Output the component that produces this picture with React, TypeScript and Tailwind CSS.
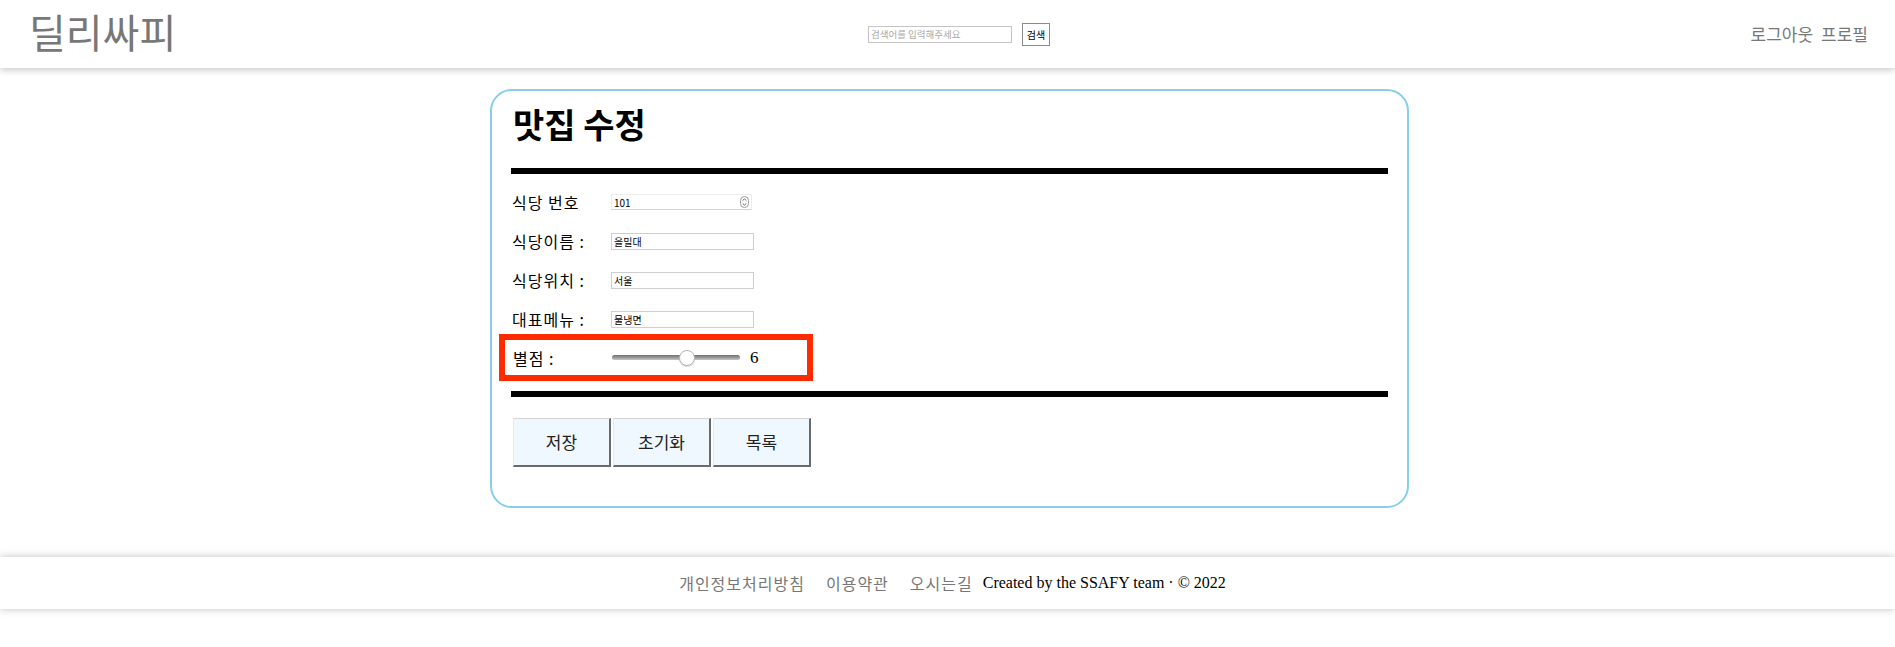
import { useState } from 'react';

const KR = '[font-family:"Noto_Sans_CJK_KR","Noto_Sans",sans-serif]';

const SpinIcon = () => (
    <svg width="9" height="12" viewBox="0 0 9 12" className="absolute right-[3px] top-[2px]">
        <rect x="0.5" y="0.5" width="8" height="11" rx="4" fill="white" stroke="#9a9a9a" />
        <path d="M2.6 4.6 L4.5 2.9 L6.4 4.6" fill="none" stroke="#555" strokeWidth="0.9" />
        <path d="M2.6 7.4 L4.5 9.1 L6.4 7.4" fill="none" stroke="#555" strokeWidth="0.9" />
    </svg>
);

const Slider = ({ value, max }: { value: number, max: number }) => {
    const left = (value / max) * (128 - 16);
    return (
        <div className="relative w-[128px] h-[16px] flex items-center">
            <div className="w-full h-[5px] rounded-full bg-gradient-to-b from-[#6f6f6f] to-[#c4c4c4]" />
            <div
                className="absolute top-0 w-[16px] h-[16px] rounded-full bg-white border border-[#b5b5b5] shadow-[0_1px_1px_rgba(0,0,0,0.15)]"
                style={{ left }}
            />
        </div>
    );
};

const Label = ({ children }: { children: string }) => (
    <span className={`w-[100px] pl-[1px] text-[16px] tracking-[1px] text-black ${KR}`}>{children}</span>
);

const Row = ({ label, value, className = '' }: { label: string, value: string, className?: string }) => (
    <div className={`flex items-center h-[30px] ${className}`}>
        <Label>{label}</Label>
        <input
            readOnly
            value={value}
            className={`w-[143px] h-[17px] border border-[#cfcfcf] px-[2px] text-[10px] text-black outline-none ${KR}`}
        />
    </div>
);

const App = () => {
    const [query, setQuery] = useState('');

    return (
        <div className="min-h-[647px] bg-white">
            <header className="h-[68px] flex items-center bg-white shadow-[0_2px_7px_rgba(0,0,0,0.22)] relative z-10">
                <div className="flex-1 pl-[29px] pb-[6px]">
                    <span className={`text-[40px] leading-[50px] text-[#777] ${KR}`}>딜리싸피</span>
                </div>
                <div className="flex items-center pl-[21px] gap-[10px]">
                    <input
                        value={query}
                        onChange={(e) => setQuery(e.target.value)}
                        placeholder="검색어를 입력해주세요"
                        className={`w-[144px] h-[17px] border border-[#c4c4c4] px-[2px] text-[9.5px] placeholder:text-[#a9a9a9] outline-none ${KR}`}
                    />
                    <button className={`w-[28px] h-[23px] border border-[#8a8a8a] bg-white text-[10px] text-black ${KR}`}>검색</button>
                </div>
                <div className={`flex-1 flex justify-end gap-[8px] pr-[27px] text-[17px] text-[#777] ${KR}`}>
                    <a href="#">로그아웃</a>
                    <a href="#">프로필</a>
                </div>
            </header>

            <main className="pt-[21px] pb-[49px] pl-[4px]">
                <div className="mx-auto w-[919px] rounded-[22px] border-2 border-[#87ceeb] px-[19px] pt-[12px] pb-[39px]">
                    <h1 className={`pl-[2px] text-[34px] leading-[42px] font-bold text-black ${KR}`}>맛집 수정</h1>
                    <div className="mt-[23px] h-[6px] bg-black" />

                    <div className="flex items-center h-[30px] mt-[13px]">
                        <Label>식당 번호</Label>
                        <div className="relative flex">
                            <input
                                readOnly
                                value="101"
                                className={`w-[141px] h-[16px] border border-[#ececec] border-b-[#d4d4d4] px-[2px] text-[10px] text-black outline-none ${KR}`}
                            />
                            <SpinIcon />
                        </div>
                    </div>
                    <Row label="식당이름 :" value="을밀대" className="mt-[9px]" />
                    <Row label="식당위치 :" value="서울" className="mt-[9px]" />
                    <Row label="대표메뉴 :" value="물냉면" className="mt-[9px]" />

                    <div className="ml-[-12px] w-[314px] h-[47px] border-[6px] border-[#ff2a00] pl-[7px] flex items-center">
                        <Label>별점 :</Label>
                        <Slider value={6} max={10} />
                        <span className="ml-[10px] text-[17px] text-black [font-family:'Liberation_Serif',serif]">6</span>
                    </div>

                    <div className="mt-[10px] h-[6px] bg-black" />

                    <div className="mt-[21px] ml-[2px] flex gap-[2px]">
                        {['저장', '초기화', '목록'].map((label) => (
                            <button
                                key={label}
                                className={`w-[98px] h-[49px] bg-[#f0f8ff] border-t border-l border-t-[#d6d6d6] border-l-[#e8e8e8] border-r-2 border-b-2 border-r-[#6a6a6a] border-b-[#6a6a6a] text-[17px] text-[#222] ${KR}`}
                            >
                                {label}
                            </button>
                        ))}
                    </div>
                </div>
            </main>

            <footer className="h-[52px] flex items-center justify-center pl-[10px] bg-white shadow-[0_0_8px_rgba(0,0,0,0.25)]">
                <a href="#" className={`text-[16px] tracking-[1px] text-[#777] ${KR}`}>개인정보처리방침</a>
                <a href="#" className={`ml-[21px] text-[16px] tracking-[1px] text-[#777] ${KR}`}>이용약관</a>
                <a href="#" className={`ml-[21px] text-[16px] tracking-[1px] text-[#777] ${KR}`}>오시는길</a>
                <span className="ml-[10px] text-[16px] text-black [font-family:'Liberation_Serif',serif]">Created by the SSAFY team · © 2022</span>
            </footer>
        </div>
    );
};

export default App;
